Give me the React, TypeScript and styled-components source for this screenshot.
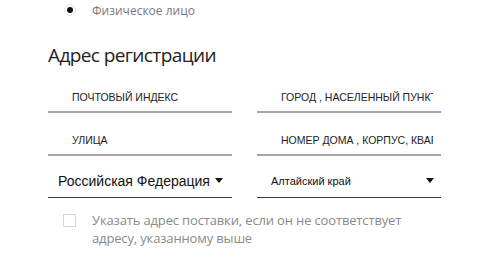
import React from 'react';
import styled, { createGlobalStyle } from 'styled-components';

const GlobalStyle = createGlobalStyle`
  html, body {
    margin: 0;
    padding: 0;
    background: #fff;
  }
`;

const Page = styled.div`
  width: 500px;
  height: 259px;
  overflow: hidden;
  padding-left: 48px;
  box-sizing: border-box;
  font-family: "Open Sans", "Noto Sans", sans-serif;
`;

const RadioRow = styled.label`
  display: flex;
  align-items: center;
  height: 22px;
  margin-top: -1px;
  padding-left: 16px;
  gap: 16px;
  color: #7a7a7a;
  font-size: 12px;
`;

const RadioMark = styled.span`
  width: 12px;
  height: 12px;
  border-radius: 50%;
  border: 1px solid #e4e4e4;
  box-sizing: border-box;
  display: flex;
  align-items: center;
  justify-content: center;
  &::after {
    content: '';
    width: 6px;
    height: 6px;
    border-radius: 50%;
    background: #111;
  }
`;

const Heading = styled.h2`
  margin: 21px 0 14px;
  font-weight: 400;
  font-size: 19px;
  line-height: 26px;
  color: #222;
  letter-spacing: -0.6px;
`;

const FieldGrid = styled.div`
  display: grid;
  grid-template-columns: 184px 184px;
  column-gap: 25px;
  row-gap: 12px;
`;

const TextInput = styled.input`
  width: 100%;
  height: 31px;
  box-sizing: border-box;
  border: none;
  border-bottom: 2px solid #a6a6a6;
  padding: 0 8px 0 24px;
  font-family: "Liberation Sans", Arial, sans-serif;
  font-size: 10.5px;
  text-transform: uppercase;
  color: #222;
  background: transparent;
  outline: none;
  &::placeholder {
    color: #222;
    opacity: 1;
  }
`;

const SelectBox = styled.div<{ $spread?: boolean; $small?: boolean }>`
  display: flex;
  align-items: center;
  justify-content: ${p => (p.$spread ? 'space-between' : 'flex-start')};
  gap: 5px;
  height: 34px;
  margin-top: -4px;
  box-sizing: border-box;
  border-bottom: 1px solid #3a3a3a;
  padding: 0 7px 0 ${p => (p.$small ? '14px' : '10px')};
  font-family: "Liberation Sans", Arial, sans-serif;
  font-size: ${p => (p.$small ? '11px' : '14px')};
  color: #111;
`;

const Caret = styled.span`
  width: 0;
  height: 0;
  border-left: 4.5px solid transparent;
  border-right: 4.5px solid transparent;
  border-top: 5px solid #111;
`;

const CheckRow = styled.label`
  display: flex;
  align-items: flex-start;
  gap: 16px;
  margin-top: 13px;
  padding-left: 15px;
  color: #8a8a8a;
  font-size: 13px;
  line-height: 18px;
`;

const CheckMark = styled.span`
  flex: none;
  width: 13px;
  height: 13px;
  margin-top: 3px;
  border: 1px solid #d6d6d6;
  box-sizing: border-box;
`;

const CheckText = styled.span`
  width: 340px;
  letter-spacing: -0.15px;
`;

export default function App() {
  return (
    <>
      <GlobalStyle />
      <Page>
        <RadioRow>
          <RadioMark />
          Физическое лицо
        </RadioRow>
        <Heading>Адрес регистрации</Heading>
        <FieldGrid>
          <TextInput placeholder="Почтовый индекс" />
          <TextInput placeholder="Город , населенный пункт" />
          <TextInput placeholder="Улица" />
          <TextInput placeholder="Номер дома , корпус, квартира" />
          <SelectBox>
            Российская Федерация
            <Caret />
          </SelectBox>
          <SelectBox $spread $small>
            Алтайский край
            <Caret />
          </SelectBox>
        </FieldGrid>
        <CheckRow>
          <CheckMark />
          <CheckText>
            Указать адрес поставки, если он не соответствует
            <br />
            адресу, указанному выше
          </CheckText>
        </CheckRow>
      </Page>
    </>
  );
}
